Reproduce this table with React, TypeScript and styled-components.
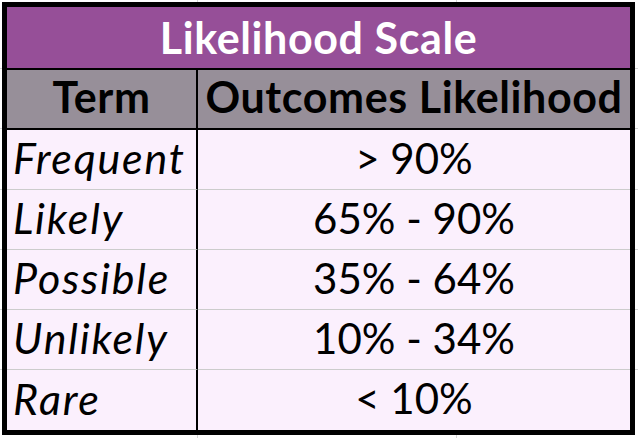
import React from "react";
import styled, { createGlobalStyle } from "styled-components";

const GlobalStyle = createGlobalStyle`
  html, body { margin: 0; padding: 0; }
  body {
    background-color: #ffffff;
    font-family: "Lato", "Liberation Sans", sans-serif;
  }
`;

const grid = "#d6d6d6";

const Sheet = styled.div`
  width: 638px;
  height: 438px;
  box-sizing: border-box;
  padding: 2px 3px 0 2px;
  background:
    linear-gradient(${grid}, ${grid}) 197px 0 / 1px 100% no-repeat,
    linear-gradient(${grid}, ${grid}) 456px 0 / 1px 100% no-repeat,
    linear-gradient(${grid}, ${grid}) 0 68px / 100% 1px no-repeat,
    linear-gradient(${grid}, ${grid}) 0 128px / 100% 1px no-repeat,
    linear-gradient(${grid}, ${grid}) 0 189px / 100% 1px no-repeat,
    linear-gradient(${grid}, ${grid}) 0 249px / 100% 1px no-repeat,
    linear-gradient(${grid}, ${grid}) 0 309px / 100% 1px no-repeat,
    linear-gradient(${grid}, ${grid}) 0 369px / 100% 1px no-repeat,
    #ffffff;
`;

const Table = styled.div`
  width: 633px;
  height: 433px;
  box-sizing: border-box;
  border: 5px solid #000;
  display: grid;
  grid-template-columns: 191px 432px;
  grid-template-rows: 63px 60px repeat(4, 60px) 60px;
  background: #fbf0fd;
`;

const Title = styled.div`
  grid-column: 1 / span 2;
  background: #964f98;
  border-bottom: 2px solid #000;
  color: #ffffff;
  font-weight: 700;
  font-size: 43px;
  letter-spacing: 0.6px;
  display: flex;
  align-items: center;
  justify-content: center;
  padding-bottom: 1px;
  white-space: nowrap;
`;

const Head = styled.div<{ $first?: boolean }>`
  background: #978f99;
  border-bottom: 2px solid #000;
  border-right: ${(p) => (p.$first ? "2px solid #000" : "none")};
  color: #000;
  font-weight: 700;
  font-size: 43px;
  letter-spacing: 0.6px;
  display: flex;
  align-items: center;
  justify-content: center;
  padding-bottom: 5px;
  white-space: nowrap;
`;

const Cell = styled.div<{ $term?: boolean; $last?: boolean }>`
  border-bottom: ${(p) => (p.$last ? "none" : "1px solid #cccccc")};
  border-right: ${(p) => (p.$term ? "2px solid #000" : "none")};
  color: #000;
  font-size: ${(p) => (p.$term ? "43px" : "42px")};
  letter-spacing: ${(p) => (p.$term ? "1.8px" : "0")};
  font-style: ${(p) => (p.$term ? "italic" : "normal")};
  display: flex;
  align-items: center;
  justify-content: ${(p) => (p.$term ? "flex-start" : "center")};
  padding-left: ${(p) => (p.$term ? "6px" : "0")};
  padding-bottom: 4px;
  white-space: nowrap;
  overflow: hidden;
`;

const rows = [
  ["Frequent", "> 90%"],
  ["Likely", "65% - 90%"],
  ["Possible", "35% - 64%"],
  ["Unlikely", "10% - 34%"],
  ["Rare", "< 10%"],
];

export default function App() {
  return (
    <>
      <GlobalStyle />
      <Sheet>
        <Table>
          <Title>Likelihood Scale</Title>
          <Head $first>Term</Head>
          <Head>Outcomes Likelihood</Head>
          {rows.map(([t, v], i) => (
            <React.Fragment key={t}>
              <Cell $term $last={i === rows.length - 1}>
                {t}
              </Cell>
              <Cell $last={i === rows.length - 1}>{v}</Cell>
            </React.Fragment>
          ))}
        </Table>
      </Sheet>
    </>
  );
}
